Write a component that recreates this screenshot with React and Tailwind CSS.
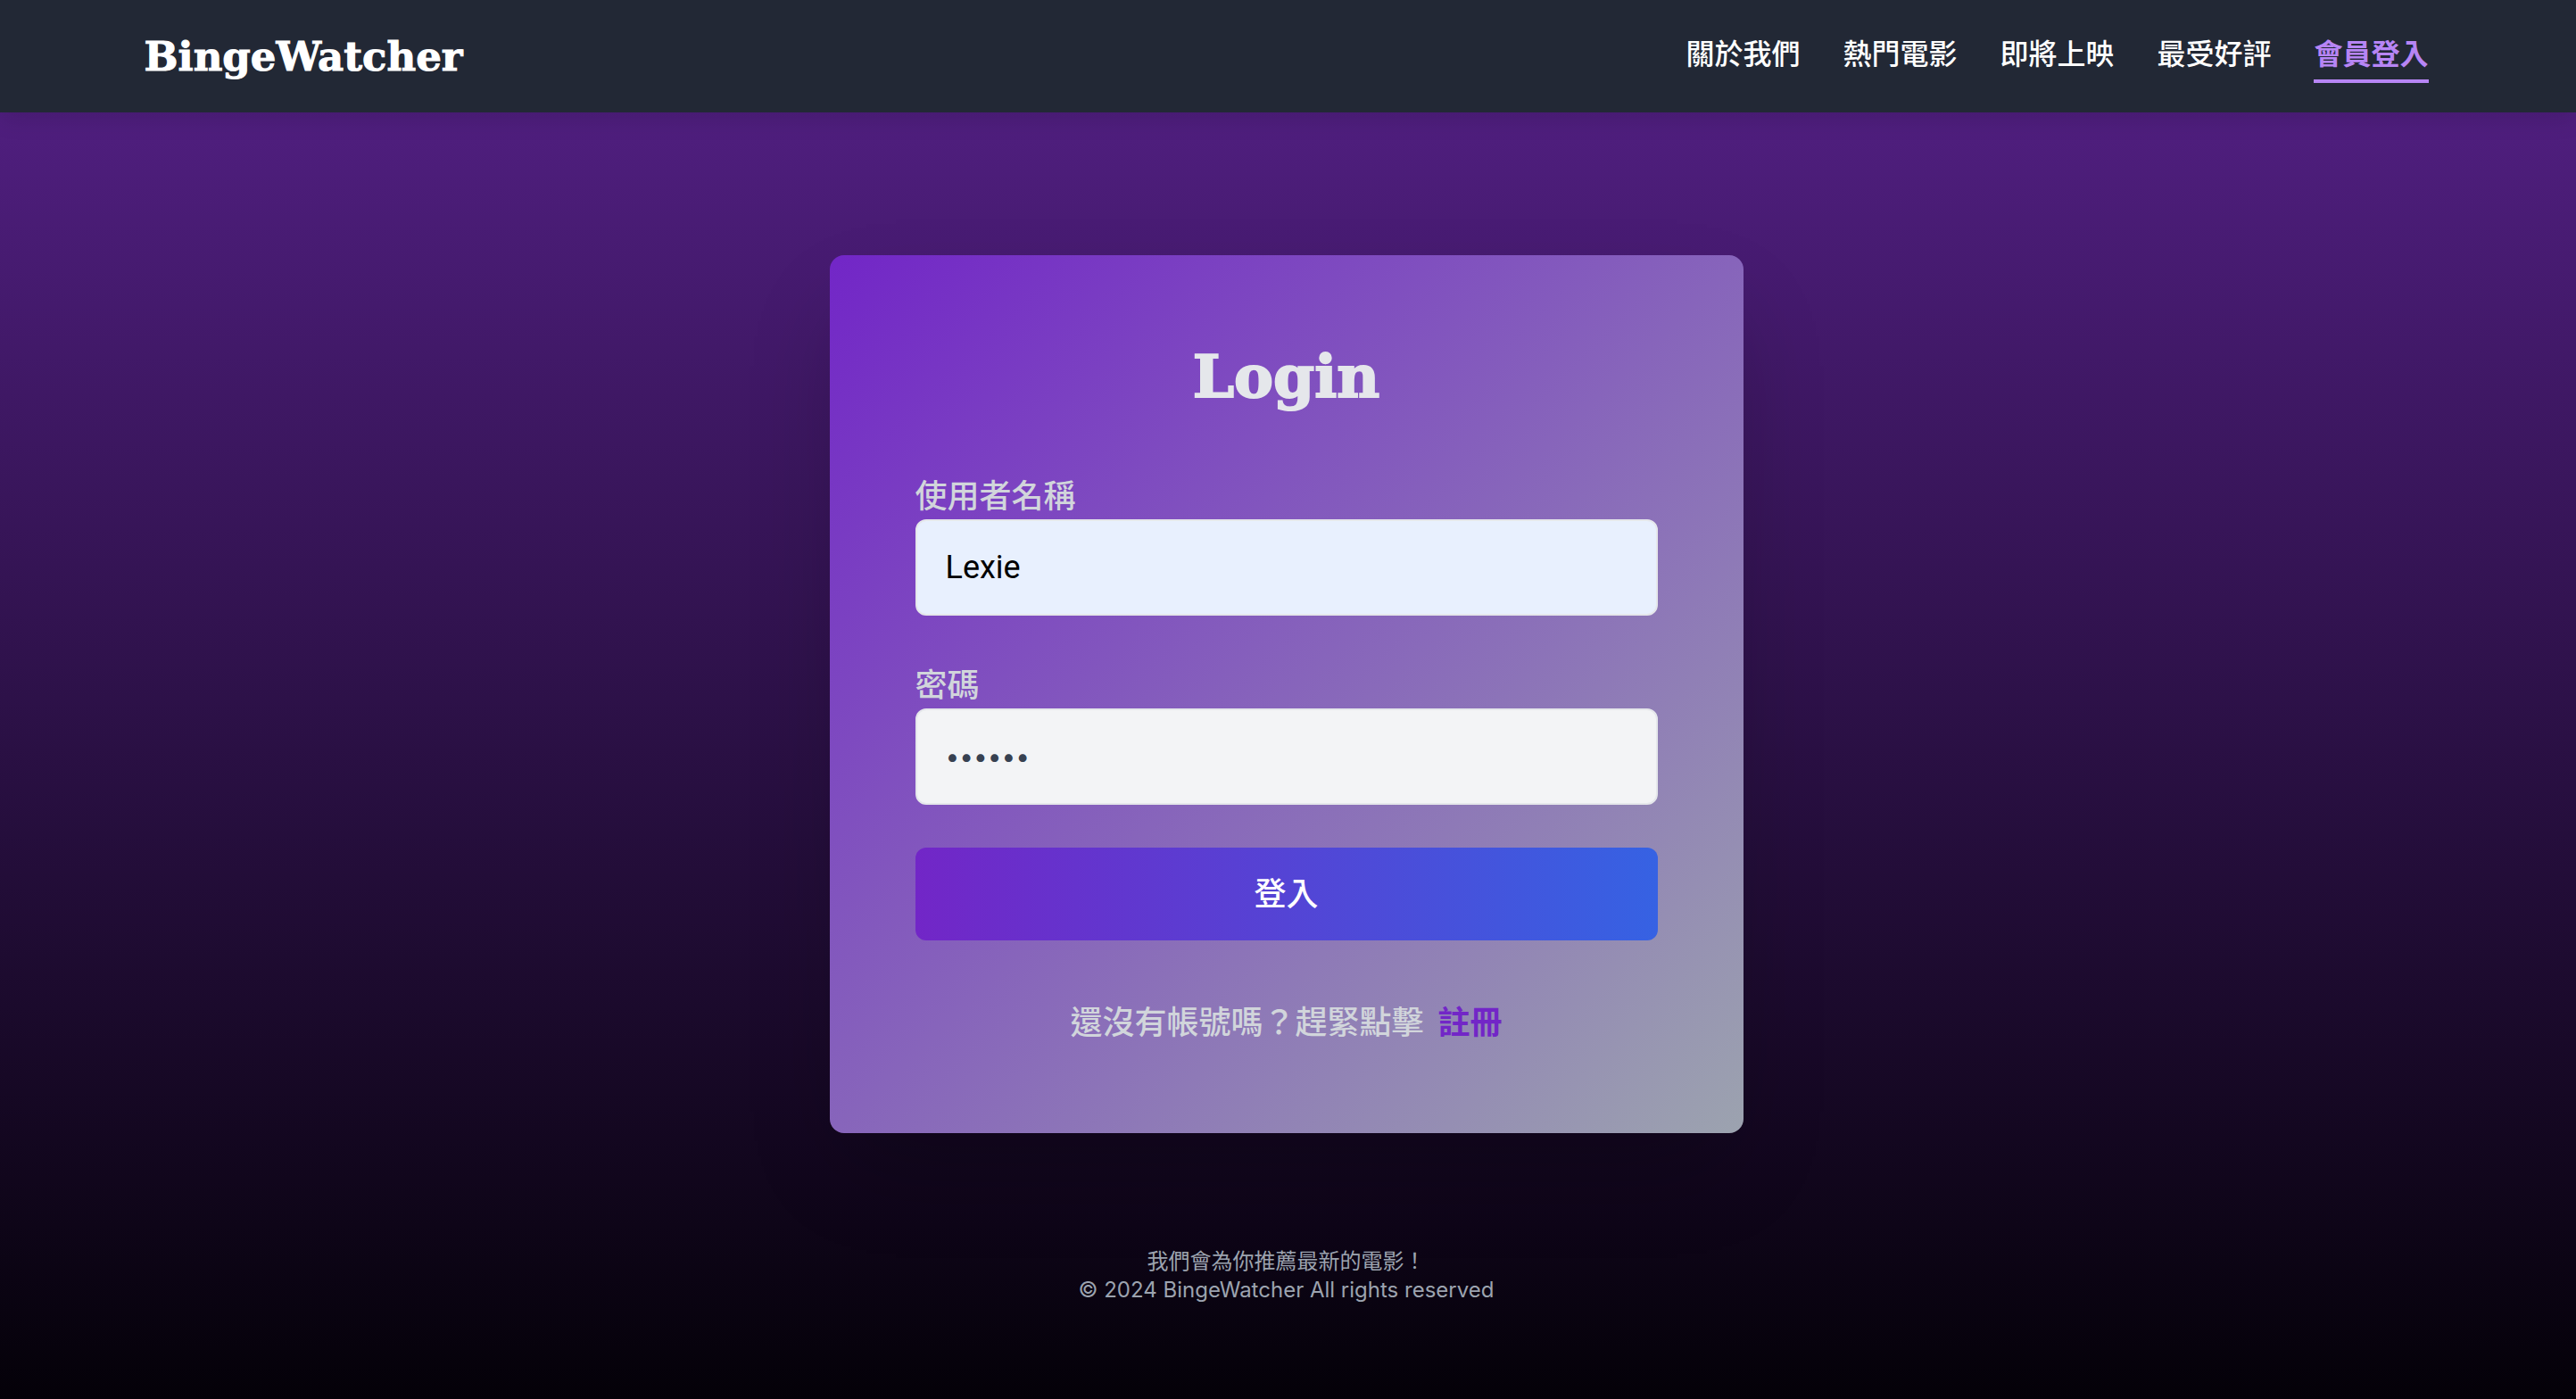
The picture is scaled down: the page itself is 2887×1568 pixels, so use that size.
const links = ["關於我們", "熱門電影", "即將上映", "最受好評"];

const labelClass = "block pt-1 text-[36px] leading-[52px] font-medium text-[#d1d5db]";
const inputClass =
  "h-[108px] w-full rounded-xl border-2 border-[#e5e7eb] px-8 outline-none";

export default function App() {
  return (
    <div className="flex min-h-screen flex-col bg-linear-to-b/srgb from-[#562189] to-[#040108] font-['Inter','Noto_Sans_CJK_TC',sans-serif]">
      <header className="bg-[#222835] pr-1 shadow-[0_8px_24px_rgba(0,0,0,0.12)]">
        <div className="mx-auto flex h-[126px] max-w-[2560px] items-center justify-between">
          <a
            href="#home"
            className="font-['DejaVu_Serif',serif] text-[45px] leading-none font-bold text-white [-webkit-text-stroke:1px]"
          >
            BingeWatcher
          </a>
          <nav className="flex gap-12 text-[32px] leading-[48px] font-medium text-white">
            {links.map((label) => (
              <a key={label} href="#movies" className="border-b-4 border-transparent py-1">
                {label}
              </a>
            ))}
            <a
              href="#login"
              aria-current="page"
              className="border-b-4 border-[#b785f5] py-1 font-bold text-[#b785f5]"
            >
              會員登入
            </a>
          </nav>
        </div>
      </header>

      <main className="flex justify-center pt-40 pr-1">
        <section className="w-full max-w-[1024px] rounded-2xl bg-linear-to-br/srgb from-[#7226c7] to-[#9ca3af] p-24 shadow-[0_50px_100px_-24px_rgba(0,0,0,0.25)]">
          <h1 className="text-center font-['DejaVu_Serif',serif] text-[66px] leading-[80px] font-bold text-[#e5e7eb] [-webkit-text-stroke:2px]">
            Login
          </h1>
          <form className="mt-16" onSubmit={(event) => event.preventDefault()}>
            <label htmlFor="username" className={labelClass}>
              使用者名稱
            </label>
            <input
              id="username"
              type="text"
              defaultValue="Lexie"
              className={`${inputClass} bg-[#e8f0fe] font-['Roboto',sans-serif] text-[36px] text-black`}
            />
            <label htmlFor="password" className={`${labelClass} mt-12`}>
              密碼
            </label>
            <input
              id="password"
              type="password"
              defaultValue="secret"
              className={`${inputClass} bg-[#f3f4f6] text-[28px] text-[#374151]`}
            />
            <button
              type="submit"
              className="mt-12 h-[104px] w-full rounded-xl bg-linear-to-r/srgb from-[#7226c7] to-[#3662e3] text-[36px] font-medium text-white"
            >
              登入
            </button>
          </form>
          <p className="mt-16 flex justify-center gap-4 text-[36px] leading-[56px] font-medium text-[#d1d5db]">
            還沒有帳號嗎？趕緊點擊
            <a href="#register" className="font-bold text-[#7226c7]">
              註冊
            </a>
          </p>
        </section>
      </main>

      <footer className="pt-32 pr-1 text-center text-[24px] leading-[32px] text-[#9ca3af]">
        <p>我們會為你推薦最新的電影！</p>
        <p>© 2024 BingeWatcher All rights reserved</p>
      </footer>
    </div>
  );
}
